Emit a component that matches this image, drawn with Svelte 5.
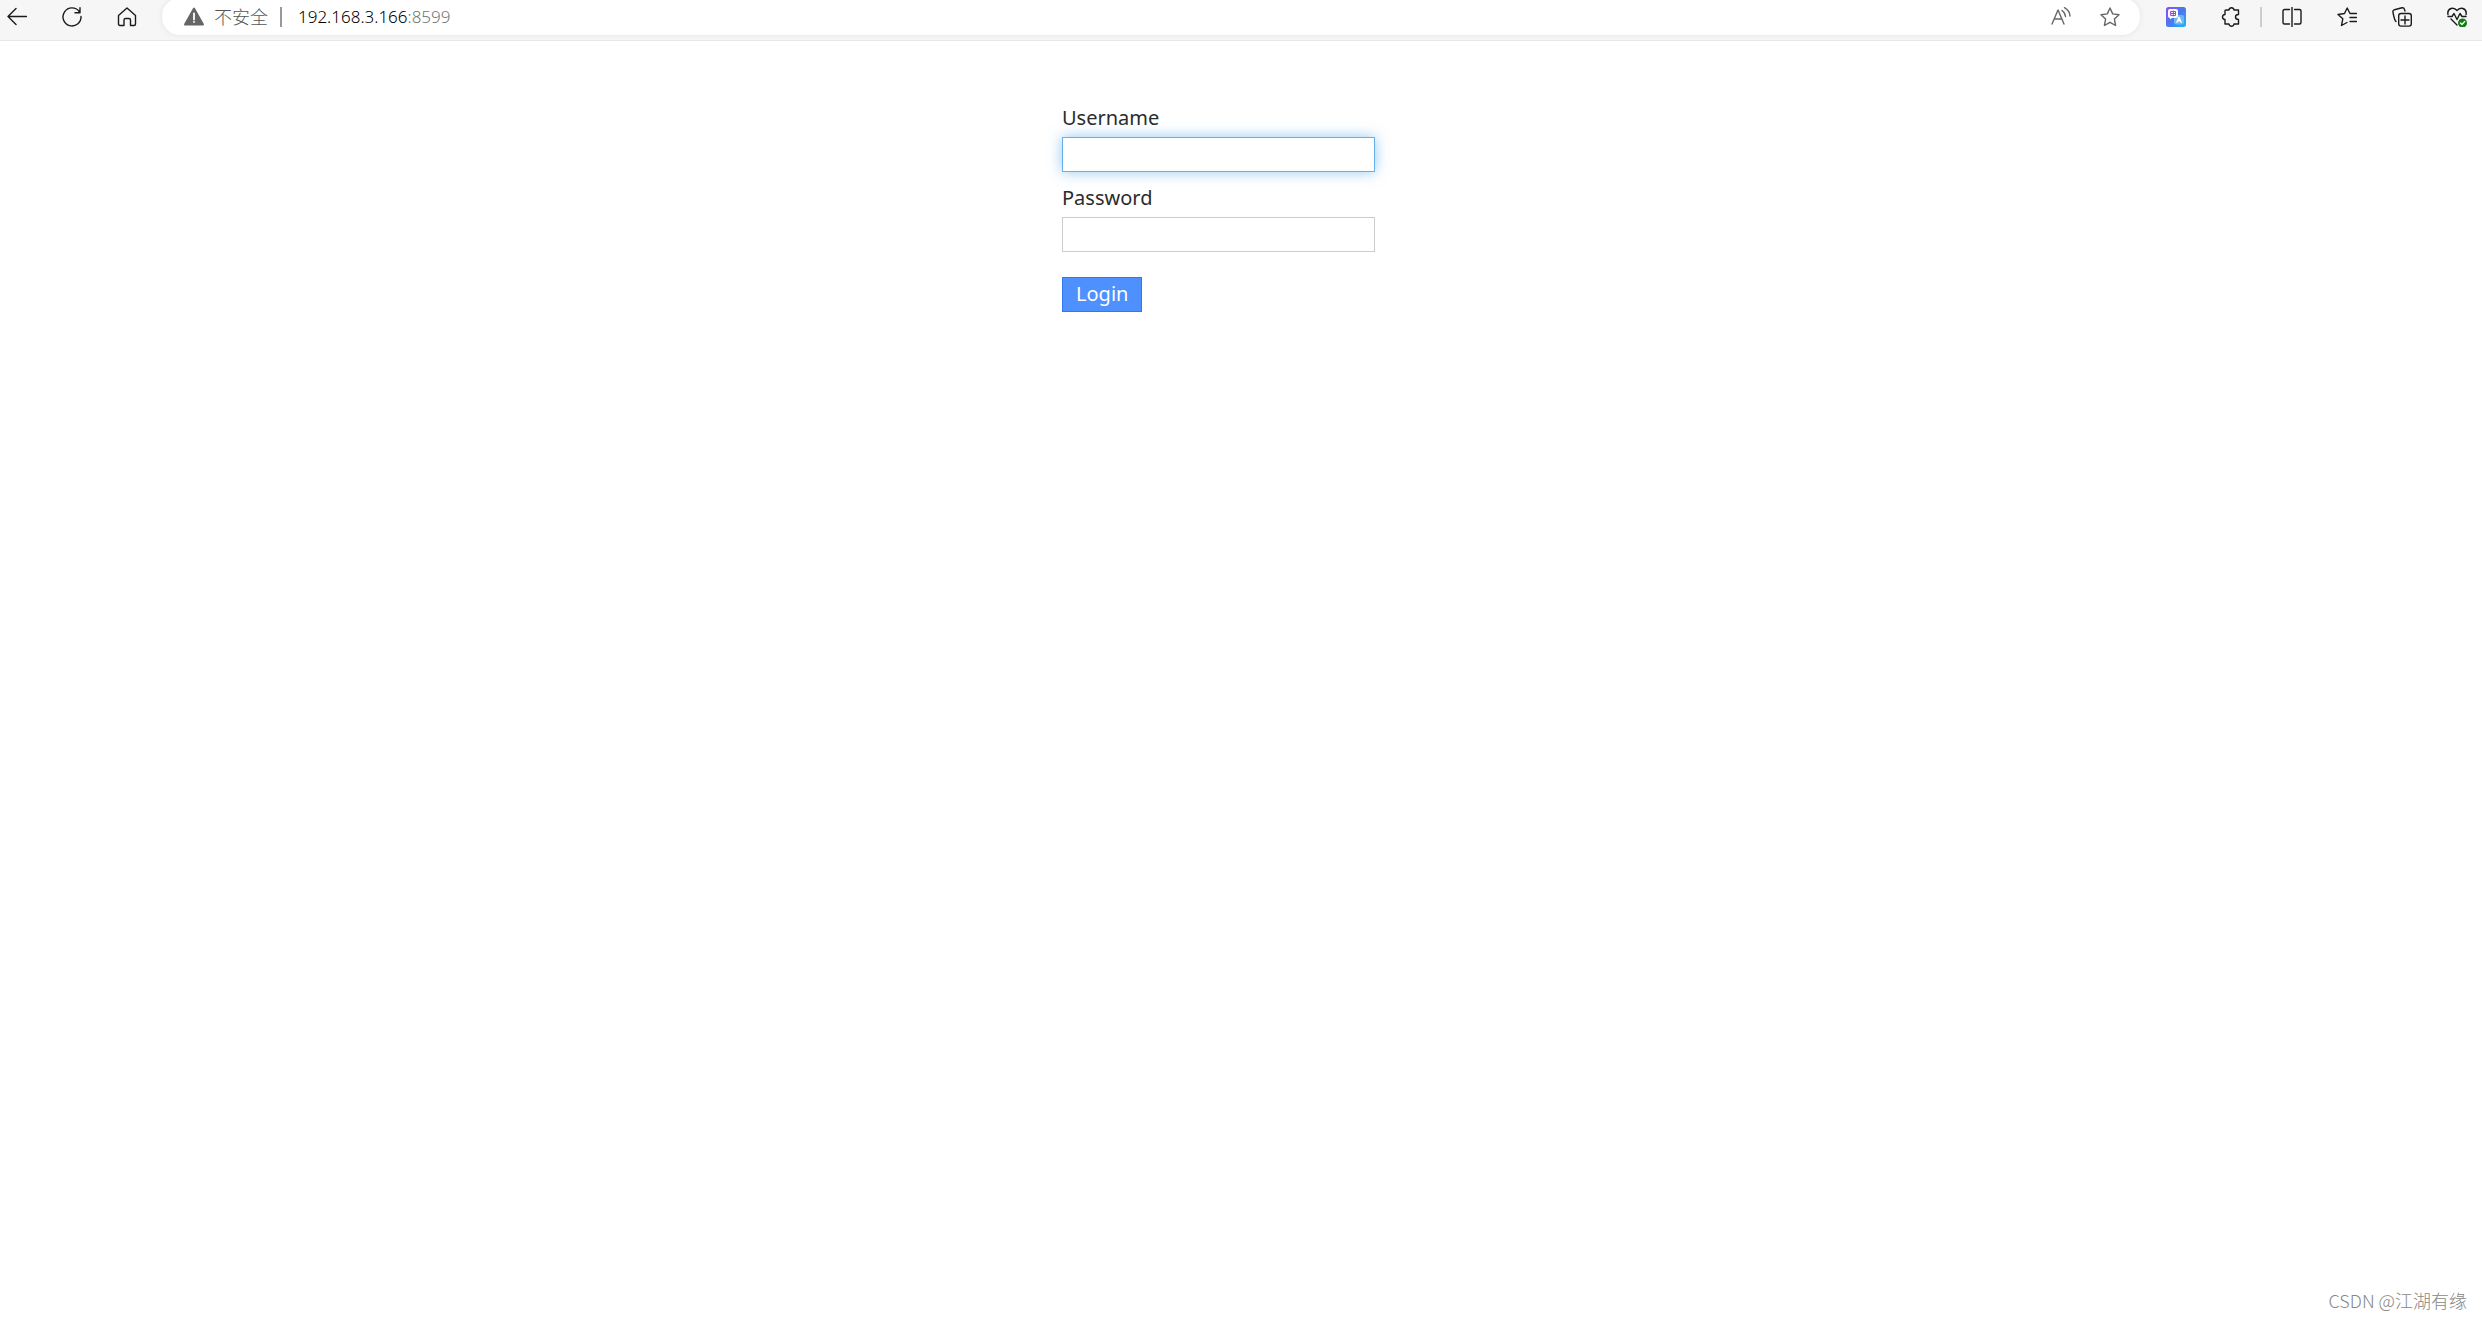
<script lang="ts">
	let username = '';
	let password = '';

	const host = '192.168.3.166';
	const port = ':8599';

	function login() {
		password = '';
	}
</script>

<style>
	:global(body) {
		background: #fff;
		font-family: 'Noto Sans', 'Noto Sans CJK SC', sans-serif;
	}

	.page {
		display: flex;
		flex-direction: column;
		min-height: 100vh;
	}

	.toolbar {
		display: flex;
		align-items: flex-start;
		height: 40px;
		overflow: hidden;
		background: #f6f6f6;
		border-bottom: 1px solid #e8e8e8;
	}

	button {
		font-family: inherit;
		cursor: pointer;
	}

	.icon {
		display: block;
		padding: 0;
		border: none;
		background: none;
		height: 20px;
		color: #1b1b1b;
	}

	.icon svg {
		display: block;
		width: 20px;
		height: 20px;
	}

	svg {
		fill: none;
		stroke: currentColor;
		stroke-width: 1.4;
		stroke-linecap: round;
		stroke-linejoin: round;
	}

	.nav {
		display: flex;
		gap: 35px;
		padding: 7px 25px 0 7px;
	}

	.address {
		flex: 1;
		display: flex;
		align-items: center;
		box-sizing: border-box;
		height: 37px;
		margin-top: -2px;
		padding: 0 20px 0 22px;
		border-radius: 18px;
		background: #fff;
		box-shadow: 0 0 6px rgba(0, 0, 0, 0.08);
		font-size: 17px;
		font-weight: 300;
		line-height: 24px;
		color: #000;
	}

	.address .icon {
		color: #666;
	}

	.security {
		display: flex;
		align-items: center;
		gap: 10px;
		color: #555;
		font-size: 18px;
	}

	.divider {
		width: 2px;
		height: 20px;
		margin: 0 16px 0 12px;
		background: #999;
	}

	.port {
		color: #767676;
	}

	.page-actions {
		display: flex;
		gap: 29px;
		margin-left: auto;
	}

	.tools {
		display: flex;
		gap: 35px;
		padding: 7px 15px 0 26px;
	}

	.tools .divider {
		margin: 0 -15px 0 -16px;
		background: #ccc;
	}

	.login {
		width: 358px;
		margin: 63px auto 0;
		font-size: 20px;
		line-height: 28px;
		color: #2b2b2b;
	}

	.login label {
		display: block;
		margin-bottom: 5px;
	}

	.login input {
		display: block;
		box-sizing: border-box;
		width: 313px;
		height: 35px;
		margin: 0 0 12px;
		padding: 4px 8px;
		border: 1px solid #ccc;
		outline: none;
		font: inherit;
	}

	.login input.active {
		border-color: #66afe9;
		box-shadow: 0 0 14px rgba(102, 175, 233, 0.7);
	}

	.login button {
		display: block;
		box-sizing: border-box;
		height: 35px;
		margin-top: 25px;
		padding: 0 13px 2px;
		border: 1px solid #3079ed;
		background: #4d90fe;
		color: #fff;
		font-size: 20px;
		line-height: 28px;
	}

	.watermark {
		margin: auto 15px 6px auto;
		color: #888;
		font-family: 'Noto Sans CJK SC', sans-serif;
		font-size: 18px;
		font-weight: 300;
		line-height: 28px;
	}
</style>

<div class="page">
	<header class="toolbar">
		<nav class="nav">
			<button class="icon" aria-label="Back">
				<svg viewBox="0 0 20 20"><path d="M9 1.500 1 9.500l8 8M1 9.500h18.500" /></svg>
			</button>
			<button class="icon" aria-label="Reload">
				<svg viewBox="0 0 20 20"><path d="M17.200 4.500A9 9 0 1 0 19 9.500M18 .8v5h-5" /></svg>
			</button>
			<button class="icon" aria-label="Home">
				<svg viewBox="0 0 20 20"><path d="M1.500 8.500 10 1l8.500 7.500V17q0 1.500-1.500 1.500h-3.500V13q0-1.500-1.500-1.500H8.500Q7 11.500 7 13v5.500H3Q1.500 18.500 1.500 17z" /></svg>
			</button>
		</nav>

		<div class="address">
			<div class="security">
				<button class="icon" aria-label="Site information">
					<svg viewBox="0 0 20 20">
						<path d="M10 1.500 19 17.500H1z" fill="currentColor" stroke-width="2" />
						<path d="M10 6.500v6M10 15v.1" stroke="#fff" stroke-width="1.8" />
					</svg>
				</button>
				<span>不安全</span>
			</div>
			<span class="divider"></span>
			<span>{host}<span class="port">{port}</span></span>

			<div class="page-actions">
				<button class="icon" aria-label="Read aloud">
					<svg viewBox="0 0 20 20"><path d="m1 17 6-14 6 14M3.200 12h7.600M11 3.500q3 2 3.500 6M13.500.7Q18.500 3.500 19 9" /></svg>
				</button>
				<button class="icon" aria-label="Add to favorites">
					<svg viewBox="0 0 20 20"><path d="m10 1 2.700 5.900 6.300.8-4.600 4.400 1.200 6.400L10 15.300l-5.600 3.200 1.200-6.400L1 7.700l6.300-.8z" /></svg>
				</button>
			</div>
		</div>

		<div class="tools">
			<button class="icon" aria-label="Translate">
				<svg viewBox="0 0 20 20">
					<defs>
						<linearGradient id="translate" x1="0" y1="0" x2="1" y2="1">
							<stop offset="0" stop-color="#864df4" />
							<stop offset="0.5" stop-color="#4b79ed" />
							<stop offset="1" stop-color="#16b9f5" />
						</linearGradient>
					</defs>
					<rect width="20" height="20" rx="2.500" fill="url(#translate)" stroke="none" />
					<rect x="8" y="8" width="10" height="9.500" rx="2" fill="#6fb8f6" stroke="none" />
					<path d="M4 2h6q2 0 2 2v5q0 2-2 2H6l-2 1.500V11Q2 11 2 9V4q0-2 2-2z" fill="#fff" stroke="none" />
					<path d="M5 4.500h4.500v4H5zM5 6.500h4.500M7.300 4v5" stroke="#a044dc" stroke-width="1" />
					<path d="m10.900 15.300 2.100-5 2.100 5M11.700 13.800h2.600" stroke="#fff" />
				</svg>
			</button>
			<button class="icon" aria-label="Extensions">
				<svg viewBox="0 0 20 20" stroke-width="1.6"><path d="M5 3h3q.3-2.200 2.500-2.200T13 3h4.500v4.500q-3 0-3 2.500t3 2.500V17H13q-.3 2.200-2.500 2.200T8 17H4v-4.500Q1.500 12.300 1.500 10T4 7.500V4q0-1 1-1z" /></svg>
			</button>
			<span class="divider"></span>
			<button class="icon" aria-label="Split screen">
				<svg viewBox="0 0 20 20"><path d="M7.500 2.500h-5q-1.500 0-1.500 1.500v11.500Q1 17 2.500 17h5M12.500 2.500h5q1.500 0 1.500 1.500v11.500q0 1.500-1.500 1.500h-5M10 .5v19" /></svg>
			</button>
			<button class="icon" aria-label="Favorites">
				<svg viewBox="0 0 20 20"><path d="M19.500 6.500H13L10.200 1 7.500 6.500l-6.500 1 4.800 4.300-1.300 6.700 5.500-3M13 10.500h6.500M13 14.500h6.500" /></svg>
			</button>
			<button class="icon" aria-label="Collections">
				<svg viewBox="0 0 20 20"><path d="M4 14.500Q2.500 13.500 1 5.500.5 3.300 2.500 2.700L10 .8q2-.3 2.500 1.700l.5 1.500M9 6.500h8q2.300 0 2.300 2.300v8q0 2.300-2.300 2.300H9q-2.300 0-2.300-2.300v-8Q6.700 6.500 9 6.500zM13 9v8M9 13h8" /></svg>
			</button>
			<button class="icon" aria-label="Browser essentials">
				<svg viewBox="0 0 20 20">
					<path d="M1 7.500Q0 3 4 1.500q3.500-1 6 2 2.500-3 6-2 4 1.500 3 6M1 9.500h4l2-3 3 6 3-6 2 3h4M4 12l6 6" />
					<circle cx="15.500" cy="16" r="4.500" fill="#107c10" stroke="none" />
					<path d="m13.500 16 1.500 1.500 2.700-3" stroke="#fff" />
				</svg>
			</button>
		</div>
	</header>

	<form class="login" on:submit|preventDefault={login}>
		<label for="username">Username</label>
		<input id="username" class="active" type="text" bind:value={username} />

		<label for="password">Password</label>
		<input id="password" type="password" bind:value={password} />

		<button type="submit">Login</button>
	</form>

	<footer class="watermark">CSDN @江湖有缘</footer>
</div>
